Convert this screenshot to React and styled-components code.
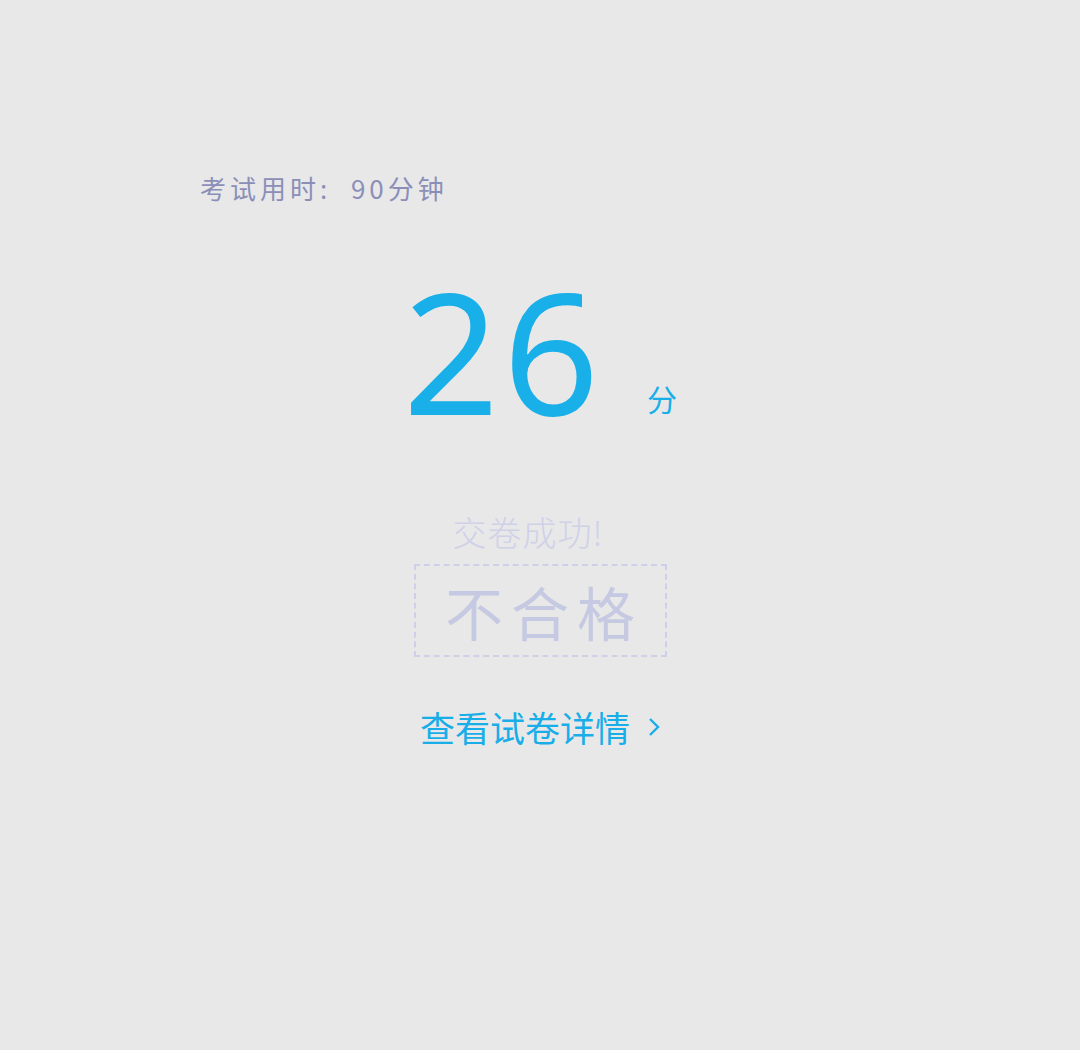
import React from 'react'
import styled, { createGlobalStyle } from 'styled-components'

const GlobalStyle = createGlobalStyle`
    html, body {
        margin: 0;
        padding: 0;
        background: #e8e8e8;
    }
    body {
        font-family: "Noto Sans CJK SC", "Noto Sans", sans-serif;
    }
`;

function App() {
    const result = { minutes: 90, score: 26, passed: false }

    return (
        <>
            <GlobalStyle />
            <PageStyled>
                <div className="duration">考试用时:&nbsp;&nbsp;{result.minutes}分钟</div>
                <div className="score">
                    <span className="num">{result.score}</span>
                    <span className="unit">分</span>
                </div>
                <div className="submitted">交卷成功!</div>
                <Stamp>{result.passed ? '合格' : '不合格'}</Stamp>
                <DetailLink>
                    查看试卷详情
                    <svg width="16" height="24" viewBox="0 0 16 24">
                        <path d="M4 4 L12 12 L4 20" fill="none" stroke="currentColor" strokeWidth="2.4" />
                    </svg>
                </DetailLink>
            </PageStyled>
        </>
    )
}

const PageStyled = styled.div`
    width: 1080px;
    height: 1050px;
    box-sizing: border-box;
    padding-top: 166px;
    display: flex;
    flex-direction: column;
    align-items: center;
    .duration {
        align-self: flex-start;
        margin-left: 200px;
        font-size: 26px;
        line-height: 44px;
        letter-spacing: 4px;
        color: #8b8fb8;
    }
    .score {
        margin-top: 56px;
        display: flex;
        align-items: baseline;
        color: #19afe9;
        margin-left: 0;
        .num {
            font-family: "Noto Sans", sans-serif;
            font-size: 168px;
            line-height: 168px;
            font-weight: 400;
            letter-spacing: 4px;
        }
        .unit {
            font-size: 30px;
            margin-left: 44px;
            position: relative;
            top: -4px;
        }
    }
    .submitted {
        margin-top: 76px;
        font-size: 34px;
        line-height: 44px;
        font-weight: 300;
        color: #cfd1e8;
        letter-spacing: 1px;
        margin-left: -24px;
    }
`;

const Stamp = styled.div`
    margin-top: 10px;
    width: 253px;
    height: 93px;
    box-sizing: border-box;
    border: 2px dashed #cdd0e8;
    display: flex;
    align-items: center;
    justify-content: center;
    font-size: 58px;
    letter-spacing: 8px;
    padding-left: 8px;
    color: #c6c9e2;
    font-weight: 400;
`;

const DetailLink = styled.div`
    margin-top: 45px;
    display: flex;
    align-items: center;
    gap: 16px;
    font-size: 35px;
    line-height: 50px;
    color: #1aaee8;
    margin-left: 2px;
    cursor: pointer;
`;

export default App
